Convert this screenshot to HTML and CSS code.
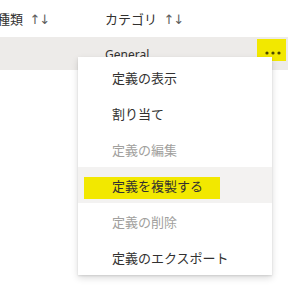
FILE: index.html
```html
<!DOCTYPE html>
<html lang="ja">
<head>
    <meta charset="UTF-8">
    <meta name="viewport" content="width=device-width, initial-scale=1.0">
    <title>定義</title>
    <link rel="stylesheet" href="styles.css">
</head>
<body>
    <div class="list">
        <div class="header">
            <div class="col col-type">種類 <span class="sort">↑↓</span></div>
            <div class="col col-cat">カテゴリ <span class="sort">↑↓</span></div>
        </div>
        <div class="row">
            <div class="col col-type"></div>
            <div class="col col-cat">General</div>
            <div class="more">
                <svg width="29" height="22" viewBox="0 0 29 22">
                    <circle cx="10" cy="14" r="1.6" fill="#4b4700"/>
                    <circle cx="16" cy="14" r="1.6" fill="#4b4700"/>
                    <circle cx="22" cy="14" r="1.6" fill="#4b4700"/>
                </svg>
            </div>
        </div>
    </div>

    <div class="menu">
        <button class="item">定義の表示</button>
        <button class="item">割り当て</button>
        <button class="item" disabled>定義の編集</button>
        <button class="item hover"><span class="mark"></span><span class="label">定義を複製する</span></button>
        <button class="item" disabled>定義の削除</button>
        <button class="item">定義のエクスポート</button>
    </div>
</body>
</html>
```

FILE: styles.css
```css
body {
    margin: 0;
    font-family: "Noto Sans", "Noto Sans CJK JP", sans-serif;
    font-size: 13px;
    color: #323130;
    background: #fff;
}

.list {
    width: 291px;
    margin-left: -3px;
}

.header {
    display: flex;
    align-items: center;
    height: 37px;
    font-size: 13px;
    color: #323130;
}

.col-type {
    width: 108px;
}

.sort {
    margin-left: 3px;
    color: #605e5c;
    font-family: "DejaVu Sans", sans-serif;
    font-size: 13px;
    letter-spacing: -1px;
}

.row {
    position: relative;
    display: flex;
    align-items: flex-start;
    height: 33px;
    background: #edebe9;
}

.row .col-cat {
    padding-top: 9px;
    font-size: 12px;
}

.more {
    position: absolute;
    left: 260px;
    top: 2px;
    width: 29px;
    height: 22px;
    background: #f2e800;
}

.more svg {
    display: block;
}

.menu {
    position: absolute;
    left: 78px;
    top: 57px;
    width: 194px;
    display: flex;
    flex-direction: column;
    padding: 2px 0 0;
    background: #fff;
    box-shadow: 0 3px 7px rgba(0, 0, 0, 0.14), 0 0.6px 1.8px rgba(0, 0, 0, 0.11);
}

.item {
    position: relative;
    height: 36px;
    padding: 0 0 0 34px;
    border: none;
    background: #fff;
    text-align: left;
    font-family: "Noto Sans CJK JP", sans-serif;
    font-size: 13px;
    color: #323130;
}

.item:disabled {
    color: #a19f9d;
}

.item.hover {
    background: #f3f2f1;
}

.item .mark {
    position: absolute;
    left: 6px;
    top: 10px;
    width: 136px;
    height: 22px;
    background: #f2e800;
}

.item .label {
    position: relative;
}
```
